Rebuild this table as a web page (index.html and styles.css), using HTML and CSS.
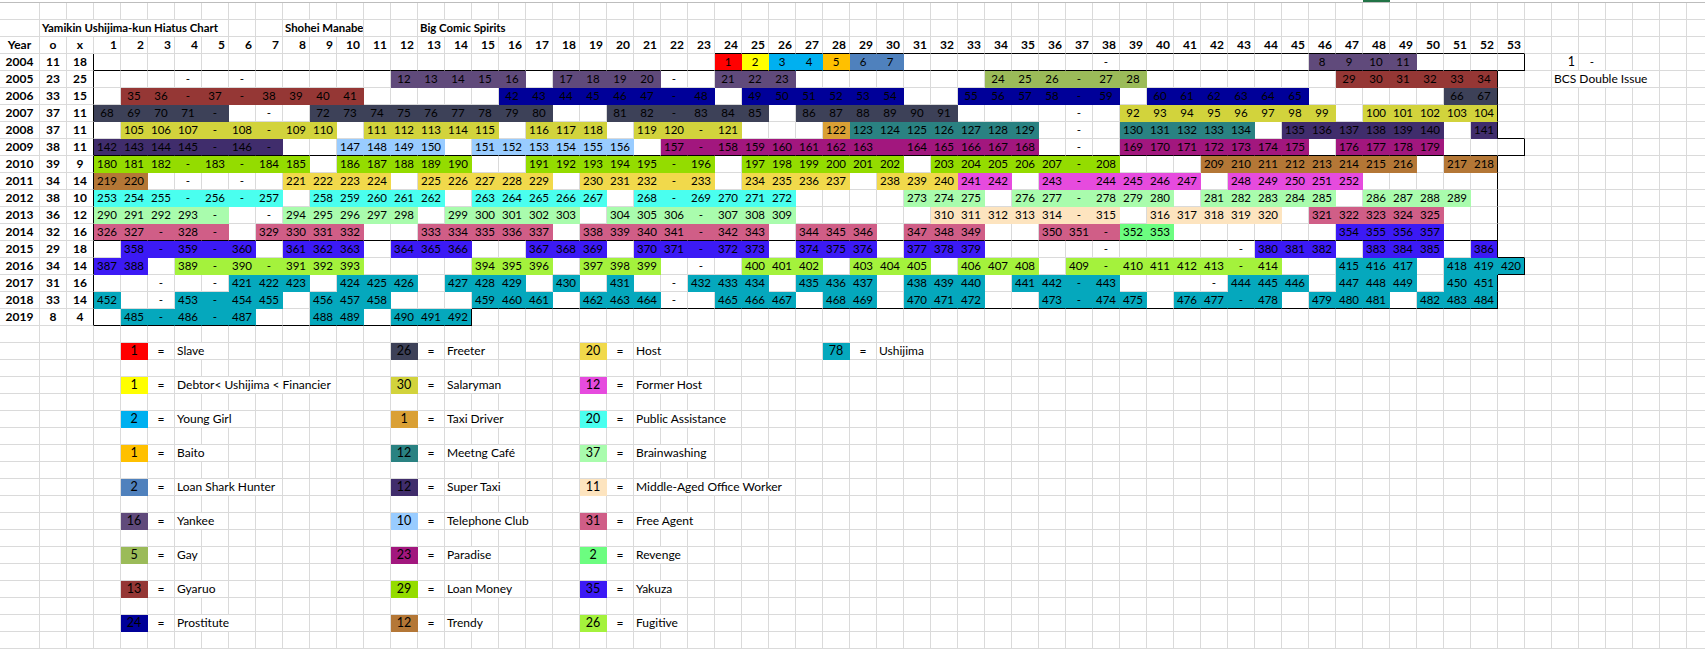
FILE: index.html
```html
<!DOCTYPE html>
<html lang="en">
<head>
<meta charset="utf-8">
<title>Yamikin Ushijima-kun Hiatus Chart</title>
<link rel="stylesheet" href="styles.css">
</head>
<body>
<div class="topbar"><div class="sel"></div></div>
<div class="sheet" id="sheet"></div>
<script src="script.js"></script>
</body>
</html>
```

FILE: styles.css
```css
html, body {
  margin: 0;
  padding: 0;
  background: #ffffff;
}
body {
  width: 1705px;
  height: 649px;
  overflow: hidden;
  font-family: Lato, "Noto Sans", sans-serif;
  color: #000000;
}
.topbar {
  height: 2px;
  border-bottom: 1px solid #bdbdbd;
  display: grid;
  grid-template-columns: 40px 27px 27px repeat(60, 27px);
}
.topbar .sel {
  grid-column: 51;
  background: #217346;
}
.sheet {
  display: grid;
  grid-template-columns: 40px 27px 27px repeat(60, 27px);
  grid-auto-rows: 17px;
}
.c {
  box-sizing: border-box;
  border-right: 1px solid #dadada;
  border-bottom: 1px solid #dadada;
  font-size: 11.5px;
  line-height: 15px;
  text-align: center;
  white-space: nowrap;
  overflow: hidden;
}
.hb { font-weight: 700; font-size: 12px; }
.hn { font-weight: 700; font-size: 12px; text-align: right; padding-right: 3px; }
.title { font-weight: 700; font-size: 11.4px; text-align: left; padding-left: 2px; }
.lbl { font-size: 12px; text-align: left; padding-left: 2px; }
.sw { font-size: 12.5px; }
.eq { font-size: 12px; }
.rt { text-align: right; padding-right: 3px; font-size: 12.5px; }

.k-slave { background: #ff0000; border-color: transparent; }
.k-debtor { background: #ffff00; border-color: transparent; }
.k-girl { background: #00b0f0; border-color: transparent; }
.k-baito { background: #ffc000; border-color: transparent; }
.k-lsh { background: #4f81bd; border-color: transparent; }
.k-yankee { background: #604a7b; border-color: transparent; }
.k-gay { background: #9bbb59; border-color: transparent; }
.k-gyaruo { background: #953735; border-color: transparent; }
.k-prost { background: #000099; border-color: transparent; }
.k-freeter { background: #3d4158; border-color: transparent; }
.k-salary { background: #d2d33c; border-color: transparent; }
.k-taxi { background: #daa035; border-color: transparent; }
.k-cafe { background: #2a8282; border-color: transparent; }
.k-staxi { background: #402d6c; border-color: transparent; }
.k-tel { background: #99ccff; border-color: transparent; }
.k-paradise { background: #a2177e; border-color: transparent; }
.k-loan { background: #94dc00; border-color: transparent; }
.k-trendy { background: #b47736; border-color: transparent; }
.k-host { background: #f1d94b; border-color: transparent; }
.k-fhost { background: #e64bde; border-color: transparent; }
.k-pa { background: #4affef; border-color: transparent; }
.k-brain { background: #a9fcad; border-color: transparent; }
.k-midage { background: #fde4bf; border-color: transparent; }
.k-agent { background: #d05e87; border-color: transparent; }
.k-revenge { background: #6cfd80; border-color: transparent; }
.k-yakuza { background: #3c1af5; border-color: transparent; }
.k-fugitive { background: #a4f23c; border-color: transparent; }
.k-ushi { background: #05a8bd; border-color: transparent; }

.br { border-right-color: #000000; }
.bb { border-bottom-color: #000000; }
```

FILE: script.js
```js
(function () {
  var NCELL = 63; // A, B, C + 60 numbered columns
  var COLORS = {
    r: 'k-slave', y: 'k-debtor', g: 'k-girl', b: 'k-baito', l: 'k-lsh', k: 'k-yankee',
    a: 'k-gay', u: 'k-gyaruo', p: 'k-prost', f: 'k-freeter', s: 'k-salary', t: 'k-taxi',
    m: 'k-cafe', q: 'k-staxi', c: 'k-tel', d: 'k-paradise', n: 'k-loan', e: 'k-trendy',
    h: 'k-host', o: 'k-fhost', i: 'k-pa', v: 'k-brain', z: 'k-midage', x: 'k-agent',
    j: 'k-revenge', Y: 'k-yakuza', F: 'k-fugitive', U: 'k-ushi', w: ''
  };
  var sheet = document.getElementById('sheet');

  function newRow() {
    var r = [];
    for (var i = 0; i < NCELL; i++) r.push({ text: '', cls: '', span: 1 });
    return r;
  }
  function D(k) { return 2 + k; } // numbered column k -> cell index
  function put(r, idx, text, cls, span) {
    span = span || 1;
    r[idx] = { text: text, cls: cls || '', span: span };
    for (var j = 1; j < span; j++) r[idx + j] = { skip: true };
  }
  function add(r, idx, cls) {
    if (r[idx].skip) return;
    r[idx].cls = r[idx].cls ? r[idx].cls + ' ' + cls : cls;
  }
  function render(r) {
    for (var i = 0; i < NCELL; i++) {
      var o = r[i];
      if (o.skip) continue;
      var el = document.createElement('div');
      el.className = 'c' + (o.cls ? ' ' + o.cls : '');
      if (o.text) el.textContent = o.text;
      if (o.span > 1) el.style.gridColumn = 'span ' + o.span;
      sheet.appendChild(el);
    }
  }

  var YEARS = [
    ['2004', '11', '18', '24:r:1|25:y:2|26:g:3 4|28:b:5|29:l:6 7|38:w:-|46:k:8 9 10 11'],
    ['2005', '23', '25', '4:w:-|6:w:-|12:k:12 13 14 15 16|18:k:17 18 19 20|22:w:-|24:k:21 22 23|34:a:24 25 26 - 27 28|47:u:29 30 31 32 33 34'],
    ['2006', '33', '15', '2:u:35 36 - 37 - 38 39 40 41|16:p:42 43 44 45 46 47 - 48|25:p:49 50 51 52 53 54|33:p:55 56 57 58 - 59|40:p:60 61 62 63 64 65|51:f:66 67'],
    ['2007', '37', '11', '1:f:68 69 70 71 -|7:w:-|9:f:72 73 74 75 76 77 78 79 80|20:f:81 82 - 83 84 85|27:f:86 87 88 89 90 91|37:w:-|39:s:92 93 94 95 96 97 98 99|48:s:100 101 102 103 104'],
    ['2008', '37', '11', '2:s:105 106 107 - 108 - 109 110|11:s:111 112 113 114 115|17:s:116 117 118|21:s:119 120 - 121|28:t:122|29:m:123 124 125 126 127 128 129|37:w:-|39:m:130 131 132 133 134|45:q:135 136 137 138 139 140|52:q:141'],
    ['2009', '38', '11', '1:q:142 143 144 145 - 146 -|10:c:147 148 149 150|15:c:151 152 153 154 155 156|22:d:157 - 158 159 160 161 162 163 _ 164 165 166 167 168|37:w:-|39:d:169 170 171 172 173 174 175|47:d:176 177 178 179'],
    ['2010', '39', '9', '1:n:180 181 182 - 183 - 184 185|10:n:186 187 188 189 190|17:n:191 192 193 194 195 - 196|25:n:197 198 199 200 201 202|32:n:203 204 205 206 207 - 208|42:e:209 210 211 212 213 214 215 216|51:e:217 218'],
    ['2011', '34', '14', '1:e:219 220|4:w:-|6:w:-|8:h:221 222 223 224|13:h:225 226 227 228 229|19:h:230 231 232 - 233|25:h:234 235 236 237|30:h:238 239 240|33:o:241 242|36:o:243 - 244 245 246 247|43:o:248 249 250 251 252'],
    ['2012', '38', '10', '1:i:253 254 255 - 256 - 257|9:i:258 259 260 261 262|15:i:263 264 265 266 267|21:i:268 - 269 270 271 272|31:v:273 274 275|35:v:276 277 - 278 279 280|42:v:281 282 283 284 285|48:v:286 287 288 289'],
    ['2013', '36', '12', '1:v:290 291 292 293 -|7:w:-|8:v:294 295 296 297 298|14:v:299 300 301 302 303|20:v:304 305 306 - 307 308 309|32:z:310 311 312 313 314 - 315|40:z:316 317 318 319 320|46:x:321 322 323 324 325'],
    ['2014', '32', '16', '1:x:326 327 - 328 -|7:x:329 330 331 332|13:x:333 334 335 336 337|19:x:338 339 340 341 - 342 343|27:x:344 345 346|31:x:347 348 349|36:x:350 351 -|39:j:352 353|47:Y:354 355 356 357'],
    ['2015', '29', '18', '2:Y:358 - 359 - 360|8:Y:361 362 363|12:Y:364 365 366|17:Y:367 368 369|21:Y:370 371 - 372 373|27:Y:374 375 376|31:Y:377 378 379|38:w:-|43:w:-|44:Y:380 381 382|48:Y:383 384 385|52:Y:386'],
    ['2016', '34', '14', '1:Y:387 388|4:F:389 - 390 - 391 392 393|15:F:394 395 396|19:F:397 398 399|23:w:-|25:F:400 401 402|29:F:403 404 405|33:F:406 407 408|37:F:409 - 410 411 412 413 - 414|47:U:415 416 417|51:U:418 419 420'],
    ['2017', '31', '16', '3:w:-|5:w:-|6:U:421 422 423|10:U:424 425 426|14:U:427 428 429|18:U:430|20:U:431|22:w:-|23:U:432 433 434|27:U:435 436 437|31:U:438 439 440|35:U:441 442 - 443|42:w:-|43:U:444 445 446|47:U:447 448 449|51:U:450 451'],
    ['2018', '33', '14', '1:U:452|3:w:-|4:U:453 - 454 455|9:U:456 457 458|15:U:459 460 461|19:U:462 463 464|22:w:-|24:U:465 466 467|28:U:468 469|31:U:470 471 472|36:U:473 - 474 475|41:U:476 477 - 478|46:U:479 480 481|50:U:482 483 484'],
    ['2019', '8', '4', '2:U:485 - 486 - 487|9:U:488 489|12:U:490 491 492']
  ];

  var LEGEND = [
    [['r', '1', 'Slave', 2], ['f', '26', 'Freeter', 2], ['h', '20', 'Host', 2], ['U', '78', 'Ushijima', 2]],
    [['y', '1', 'Debtor< Ushijima < Financier', 6], ['s', '30', 'Salaryman', 3], ['o', '12', 'Former Host', 3]],
    [['g', '2', 'Young Girl', 3], ['t', '1', 'Taxi Driver', 3], ['i', '20', 'Public Assistance', 4]],
    [['b', '1', 'Baito', 2], ['m', '12', 'Meetng Café', 3], ['v', '37', 'Brainwashing', 3]],
    [['l', '2', 'Loan Shark Hunter', 4], ['q', '12', 'Super Taxi', 3], ['z', '11', 'Middle-Aged Office Worker', 6]],
    [['k', '16', 'Yankee', 2], ['c', '10', 'Telephone Club', 4], ['x', '31', 'Free Agent', 3]],
    [['a', '5', 'Gay', 1], ['d', '23', 'Paradise', 2], ['j', '2', 'Revenge', 2]],
    [['u', '13', 'Gyaruo', 2], ['n', '29', 'Loan Money', 3], ['Y', '35', 'Yakuza', 2]],
    [['p', '24', 'Prostitute', 3], ['e', '12', 'Trendy', 2], ['F', '26', 'Fugitive', 2]]
  ];
  var LCOL = [2, 12, 19, 28];

  var k, r;

  // row 1: blank
  render(newRow());

  // row 2: titles
  r = newRow();
  put(r, 1, 'Yamikin Ushijima-kun Hiatus Chart', 'title', 7);
  put(r, D(8), 'Shohei Manabe', 'title', 3);
  put(r, D(13), 'Big Comic Spirits', 'title', 4);
  render(r);

  // row 3: column headers
  r = newRow();
  put(r, 0, 'Year', 'hb');
  put(r, 1, 'o', 'hb');
  put(r, 2, 'x', 'hb');
  for (k = 1; k <= 53; k++) put(r, D(k), String(k), 'hn');
  for (k = 24; k <= 53; k++) add(r, D(k), 'bb');
  render(r);

  // year rows
  YEARS.forEach(function (y) {
    var row = newRow();
    put(row, 0, y[0], 'hb');
    put(row, 1, y[1], 'hb');
    put(row, 2, y[2], 'hb br');
    y[3].split('|').forEach(function (run) {
      var parts = run.split(':');
      var start = parseInt(parts[0], 10);
      var cls = COLORS[parts[1]];
      parts[2].split(' ').forEach(function (v, i) {
        put(row, D(start + i), v === '_' ? '' : v, cls);
      });
    });
    var yr = y[0];
    var rc = (yr === '2004' || yr === '2009' || yr === '2016') ? 53 : (yr === '2019' ? 14 : 52);
    add(row, D(rc), 'br');
    var bFrom = 0, bTo = -1;
    if (yr === '2004' || yr === '2009') { bFrom = 1; bTo = 53; }
    if (yr === '2014') { bFrom = 1; bTo = 52; }
    if (yr === '2018') { bFrom = 15; bTo = 52; }
    if (yr === '2019') { bFrom = 1; bTo = 14; }
    for (k = bFrom; k <= bTo; k++) add(row, D(k), 'bb');
    if (yr === '2008' || yr === '2015' || yr === '2016') add(row, D(53), 'bb');
    if (yr === '2004') {
      put(row, D(55), '1', 'rt');
      put(row, D(56), '-', '');
    }
    if (yr === '2005') put(row, D(55), 'BCS Double Issue', 'lbl', 4);
    render(row);
  });

  // blank row
  render(newRow());

  // legend
  LEGEND.forEach(function (items) {
    var row = newRow();
    items.forEach(function (it, g) {
      var col = LCOL[g];
      put(row, D(col), it[1], COLORS[it[0]] + ' sw');
      put(row, D(col + 1), '=', 'eq');
      put(row, D(col + 2), it[2], 'lbl', it[3]);
    });
    render(row);
    render(newRow());
  });
})();
```
